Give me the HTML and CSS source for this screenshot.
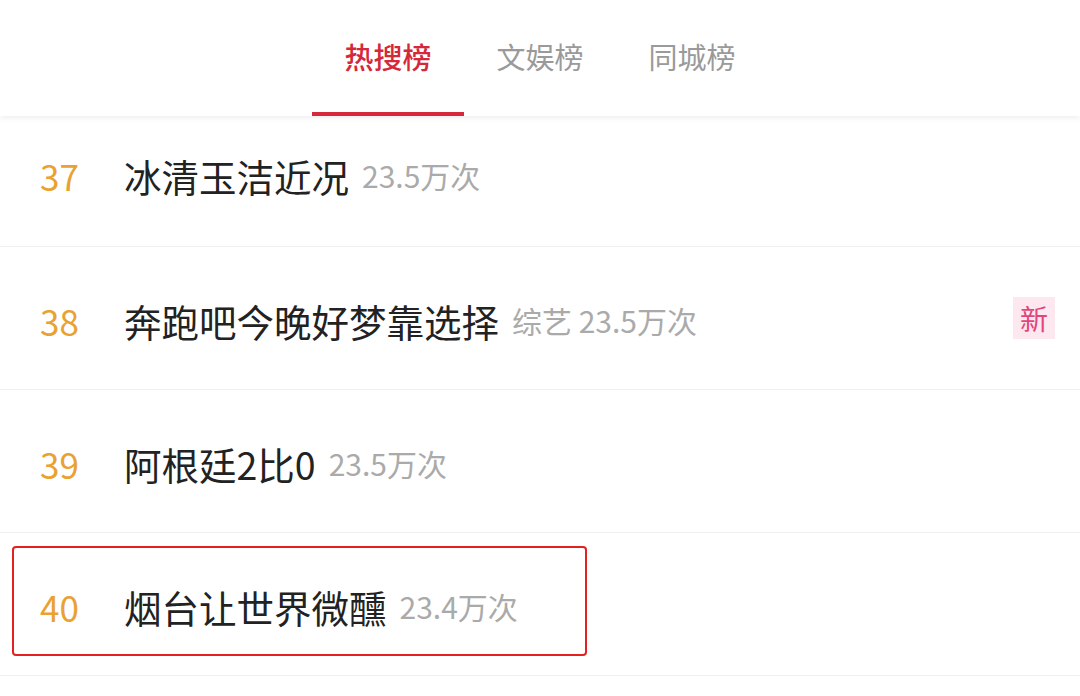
FILE: index.html
```html
<!DOCTYPE html>
<html lang="zh-CN">
<head>
<meta charset="UTF-8" />
<meta name="viewport" content="width=device-width, initial-scale=1" />
<title>热搜榜</title>
<link rel="stylesheet" href="styles.css">
</head>
<body>
  <div class="tabs">
    <div class="tab active">热搜榜</div>
    <div class="tab">文娱榜</div>
    <div class="tab">同城榜</div>
  </div>

  <ul class="list">
    <li class="item first">
      <span class="rank">37</span>
      <span class="title">冰清玉洁近况</span>
      <span class="count">23.5万次</span>
    </li>
    <li class="item">
      <span class="rank">38</span>
      <span class="title">奔跑吧今晚好梦靠选择</span>
      <span class="count">综艺 23.5万次</span>
      <span class="badge">新</span>
    </li>
    <li class="item">
      <span class="rank">39</span>
      <span class="title">阿根廷2比0</span>
      <span class="count">23.5万次</span>
    </li>
    <li class="item marked">
      <span class="rank">40</span>
      <span class="title">烟台让世界微醺</span>
      <span class="count">23.4万次</span>
      <div class="mark"></div>
    </li>
  </ul>
</body>
</html>
```

FILE: styles.css
```css
body {
  margin: 0;
  background: #fff;
  font-family: "Noto Sans CJK SC", "Noto Sans", sans-serif;
  overflow: hidden;
}
.tabs {
  height: 116px;
  display: flex;
  justify-content: center;
  box-shadow: 0 2px 6px rgba(0, 0, 0, 0.07);
  position: relative;
  z-index: 1;
}
.tab {
  width: 152px;
  box-sizing: border-box;
  text-align: center;
  font-size: 29px;
  color: #9a9a9a;
  padding-top: 34px;
  line-height: 44px;
}
.tab.active {
  color: #d5283a;
  font-weight: 500;
  border-bottom: 4px solid #d5283a;
}
.list {
  list-style: none;
  margin: 0;
  padding: 0;
}
.item {
  position: relative;
  height: 143px;
  display: flex;
  align-items: center;
  padding: 4px 0 0 40px;
  box-sizing: border-box;
  border-bottom: 1px solid #f0f0f0;
}
.item.first {
  height: 131px;
  padding-top: 0;
  padding-bottom: 12px;
}
.rank {
  width: 84px;
  font-size: 35px;
  color: #e9a232;
}
.title {
  font-size: 37.5px;
  color: #222;
  margin-right: 13px;
}
.count {
  font-size: 30px;
  color: #aaa;
}
.badge {
  position: absolute;
  right: 25px;
  top: 50px;
  width: 42px;
  height: 42px;
  line-height: 42px;
  text-align: center;
  font-size: 28px;
  color: #e0457b;
  background: #fde8ef;
}
.mark {
  position: absolute;
  left: 12px;
  top: 13px;
  width: 575px;
  height: 110px;
  box-sizing: border-box;
  border: 2px solid #e3211f;
  border-radius: 4px;
}
```
